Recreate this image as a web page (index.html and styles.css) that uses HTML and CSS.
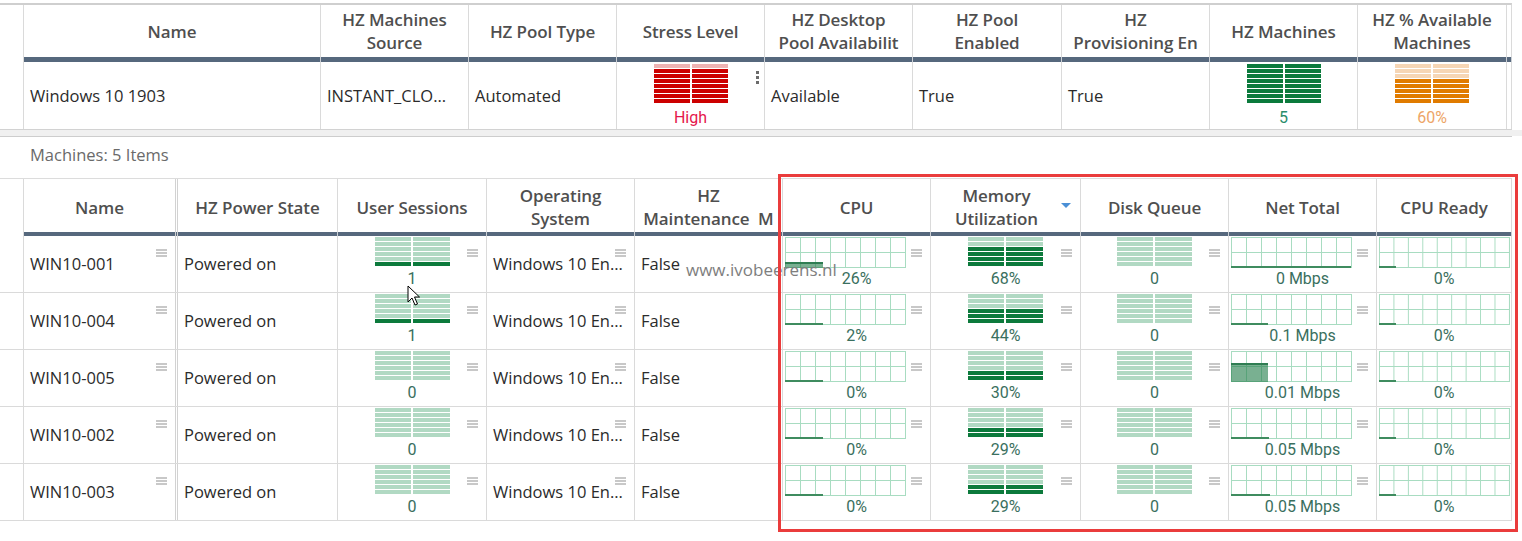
FILE: index.html
```html
<!DOCTYPE html>
<html>
<head>
<meta charset="utf-8">
<title>Horizon pools</title>
<link rel="stylesheet" href="styles.css">
</head>
<body>
<div class="page">
  <section class="panel top-panel">
    <div class="row thead tcols">
      <div class="c stub"></div>
      <div class="c h">Name</div>
      <div class="c h">HZ Machines<br>Source</div>
      <div class="c h">HZ Pool Type</div>
      <div class="c h">Stress Level</div>
      <div class="c h">HZ Desktop<br>Pool Availabilit</div>
      <div class="c h">HZ Pool<br>Enabled</div>
      <div class="c h">HZ<br>Provisioning En</div>
      <div class="c h">HZ Machines</div>
      <div class="c h">HZ % Available<br>Machines</div>
      <div class="c end"></div>
    </div>
    <div class="row hbar tcols">
      <div class="c stub"></div><div class="c"></div><div class="c"></div><div class="c"></div><div class="c"></div><div class="c"></div><div class="c"></div><div class="c"></div><div class="c"></div><div class="c"></div><div class="c"></div>
    </div>
    <div class="row tdata tcols">
      <div class="c stub"></div>
      <div class="c t">Windows 10 1903</div>
      <div class="c t">INSTANT_CLO...</div>
      <div class="c t">Automated</div>
      <div class="c g">
        <div class="bars big red"><i class="l"></i><i></i><i></i><i></i><i></i><i></i><i></i><i></i></div>
        <div class="val high">High</div>
        <span class="kebab"><b></b><b></b><b></b></span>
      </div>
      <div class="c t">Available</div>
      <div class="c t">True</div>
      <div class="c t">True</div>
      <div class="c g">
        <div class="bars big green"><i></i><i></i><i></i><i></i><i></i><i></i><i></i><i></i></div>
        <div class="val five">5</div>
      </div>
      <div class="c g">
        <div class="bars big orange"><i class="l"></i><i class="l"></i><i class="l"></i><i></i><i></i><i></i><i></i><i></i></div>
        <div class="val pct">60%</div>
      </div>
      <div class="c end"></div>
    </div>
  </section>

  <div class="gap"></div>

  <section class="panel low-panel">
    <div class="caption">Machines: 5 Items</div>
    <div class="row lhead lcols">
      <div class="c stub"></div>
      <div class="c h dbl">Name</div>
      <div class="c h">HZ Power State</div>
      <div class="c h">User Sessions</div>
      <div class="c h">Operating<br>System</div>
      <div class="c h">HZ<br>Maintenance&nbsp; M</div>
      <div class="c h">CPU</div>
      <div class="c h sorted">Memory<br>Utilization<span class="sort"></span></div>
      <div class="c h">Disk Queue</div>
      <div class="c h">Net Total</div>
      <div class="c h">CPU Ready</div>
    </div>
    <div class="row lbar lcols">
      <div class="c stub"></div><div class="c dbl"></div><div class="c"></div><div class="c"></div><div class="c"></div><div class="c"></div><div class="c"></div><div class="c"></div><div class="c"></div><div class="c"></div><div class="c"></div>
    </div>

    <!-- row 1 -->
    <div class="row lrow lcols">
      <div class="c stub"></div>
      <div class="c t dbl">WIN10-001<span class="ham"></span></div>
      <div class="c t">Powered on</div>
      <div class="c g"><div class="bars sm lg"><i></i><i></i><i></i><i></i><i></i><i class="d"></i></div><div class="val">1</div><span class="ham"></span></div>
      <div class="c t">Windows 10 En...<span class="ham"></span></div>
      <div class="c t">False</div>
      <div class="c s"><div class="spark"><span class="fill" style="width:38px;height:6px"></span></div><div class="val">26%</div><span class="ham"></span></div>
      <div class="c g"><div class="bars sm lg"><i></i><i></i><i class="d"></i><i class="d"></i><i class="d"></i><i class="d"></i></div><div class="val">68%</div><span class="ham"></span></div>
      <div class="c g"><div class="bars sm lg"><i></i><i></i><i></i><i></i><i></i><i></i></div><div class="val">0</div><span class="ham"></span></div>
      <div class="c s"><div class="spark"><span class="line" style="width:120px"></span></div><div class="val">0 Mbps</div><span class="ham"></span></div>
      <div class="c s"><div class="spark wide"><span class="line" style="width:17px"></span></div><div class="val">0%</div></div>
    </div>

    <!-- row 2 -->
    <div class="row lrow lcols">
      <div class="c stub"></div>
      <div class="c t dbl">WIN10-004<span class="ham"></span></div>
      <div class="c t">Powered on</div>
      <div class="c g"><div class="bars sm lg"><i></i><i></i><i></i><i></i><i></i><i class="d"></i></div><div class="val">1</div><span class="ham"></span></div>
      <div class="c t">Windows 10 En...<span class="ham"></span></div>
      <div class="c t">False</div>
      <div class="c s"><div class="spark"><span class="line" style="width:38px"></span></div><div class="val">2%</div><span class="ham"></span></div>
      <div class="c g"><div class="bars sm lg"><i></i><i></i><i></i><i class="d"></i><i class="d"></i><i class="d"></i></div><div class="val">44%</div><span class="ham"></span></div>
      <div class="c g"><div class="bars sm lg"><i></i><i></i><i></i><i></i><i></i><i></i></div><div class="val">0</div><span class="ham"></span></div>
      <div class="c s"><div class="spark"><span class="line" style="width:37px"></span></div><div class="val">0.1 Mbps</div><span class="ham"></span></div>
      <div class="c s"><div class="spark wide"><span class="line" style="width:17px"></span></div><div class="val">0%</div></div>
    </div>

    <!-- row 3 -->
    <div class="row lrow lcols">
      <div class="c stub"></div>
      <div class="c t dbl">WIN10-005<span class="ham"></span></div>
      <div class="c t">Powered on</div>
      <div class="c g"><div class="bars sm lg"><i></i><i></i><i></i><i></i><i></i><i></i></div><div class="val">0</div><span class="ham"></span></div>
      <div class="c t">Windows 10 En...<span class="ham"></span></div>
      <div class="c t">False</div>
      <div class="c s"><div class="spark"><span class="line" style="width:38px"></span></div><div class="val">0%</div><span class="ham"></span></div>
      <div class="c g"><div class="bars sm lg"><i></i><i></i><i></i><i></i><i class="d"></i><i class="d"></i></div><div class="val">30%</div><span class="ham"></span></div>
      <div class="c g"><div class="bars sm lg"><i></i><i></i><i></i><i></i><i></i><i></i></div><div class="val">0</div><span class="ham"></span></div>
      <div class="c s"><div class="spark"><span class="fill" style="width:37px;height:19px"></span></div><div class="val">0.01 Mbps</div><span class="ham"></span></div>
      <div class="c s"><div class="spark wide"><span class="line" style="width:17px"></span></div><div class="val">0%</div></div>
    </div>

    <!-- row 4 -->
    <div class="row lrow lcols">
      <div class="c stub"></div>
      <div class="c t dbl">WIN10-002<span class="ham"></span></div>
      <div class="c t">Powered on</div>
      <div class="c g"><div class="bars sm lg"><i></i><i></i><i></i><i></i><i></i><i></i></div><div class="val">0</div><span class="ham"></span></div>
      <div class="c t">Windows 10 En...<span class="ham"></span></div>
      <div class="c t">False</div>
      <div class="c s"><div class="spark"><span class="line" style="width:38px"></span></div><div class="val">0%</div><span class="ham"></span></div>
      <div class="c g"><div class="bars sm lg"><i></i><i></i><i></i><i></i><i class="d"></i><i class="d"></i></div><div class="val">29%</div><span class="ham"></span></div>
      <div class="c g"><div class="bars sm lg"><i></i><i></i><i></i><i></i><i></i><i></i></div><div class="val">0</div><span class="ham"></span></div>
      <div class="c s"><div class="spark"><span class="line" style="width:38px"></span></div><div class="val">0.05 Mbps</div><span class="ham"></span></div>
      <div class="c s"><div class="spark wide"><span class="line" style="width:17px"></span></div><div class="val">0%</div></div>
    </div>

    <!-- row 5 -->
    <div class="row lrow lcols">
      <div class="c stub"></div>
      <div class="c t dbl">WIN10-003<span class="ham"></span></div>
      <div class="c t">Powered on</div>
      <div class="c g"><div class="bars sm lg"><i></i><i></i><i></i><i></i><i></i><i></i></div><div class="val">0</div><span class="ham"></span></div>
      <div class="c t">Windows 10 En...<span class="ham"></span></div>
      <div class="c t">False</div>
      <div class="c s"><div class="spark"><span class="line" style="width:38px"></span></div><div class="val">0%</div><span class="ham"></span></div>
      <div class="c g"><div class="bars sm lg"><i></i><i></i><i></i><i></i><i class="d"></i><i class="d"></i></div><div class="val">29%</div><span class="ham"></span></div>
      <div class="c g"><div class="bars sm lg"><i></i><i></i><i></i><i></i><i></i><i></i></div><div class="val">0</div><span class="ham"></span></div>
      <div class="c s"><div class="spark"><span class="line" style="width:39px"></span></div><div class="val">0.05 Mbps</div><span class="ham"></span></div>
      <div class="c s"><div class="spark wide"><span class="line" style="width:17px"></span></div><div class="val">0%</div></div>
    </div>
  </section>

  <div class="watermark">www.ivobeerens.nl</div>
  <div class="highlight"></div>
  <svg class="cursor" width="14" height="22" viewBox="0 0 14 22">
    <path d="M1 1 L1 17 L5 13 L8 20 L10.5 19 L7.5 12 L12.5 12 Z" fill="#fff" stroke="#000" stroke-width="1" stroke-linejoin="round"/>
  </svg>
</div>
</body>
</html>
```

FILE: styles.css
```css
* { box-sizing: border-box; }

html, body {
  margin: 0;
  padding: 0;
  background: #ffffff;
}

.page {
  position: relative;
  width: 1522px;
  height: 541px;
  overflow: hidden;
  padding-top: 3px;
  font-family: "Open Sans", "Noto Sans", "Liberation Sans", sans-serif;
  color: #2b2b2b;
  font-size: 16.5px;
}

.panel { width: 1512px; }

.top-panel {
  border-top: 2px solid #cfcfcf;
  border-bottom: 1px solid #d2d2d2;
  border-right: 1px solid #d6d6d6;
}

.gap {
  height: 6px;
  background: #f0f0f0;
  width: 1522px;
}

.low-panel {
  border-top: 1px solid #cdcdcd;
}

.caption {
  height: 42px;
  line-height: 36px;
  padding-left: 30px;
  color: #6a6a6a;
  font-size: 16.5px;
  border-bottom: 1px solid #dcdcdc;
}

.row { display: grid; }

.tcols { grid-template-columns: 24px 297px 148px 148px 148px 148px 149px 148px 148px 149px 5px; }
.lcols { grid-template-columns: 24px 154px 160px 149px 148px 148px 148px 150px 148px 148px 135px; }

.c {
  border-right: 1px solid #dadada;
  position: relative;
  overflow: hidden;
  white-space: nowrap;
}

.c.dbl { border-right: 3px double #d2d2d2; }

/* header cells */
.h {
  display: flex;
  align-items: center;
  justify-content: center;
  text-align: center;
  font-weight: 600;
  color: #4f4f4f;
  font-size: 17px;
  line-height: 23px;
  letter-spacing: -0.1px;
}

.thead { height: 52px; }
.lhead { height: 53px; }
.lhead .h { padding-top: 3px; }

.hbar { height: 5px; }
.lbar { height: 4px; }
.hbar .c, .lbar .c {
  background: #56687d;
  border-right: 1px solid #c9ced4;
}
.hbar .c.stub, .lbar .c.stub { background: transparent; border-right: 1px solid #dadada; }
.lbar .c.dbl { border-right: 3px double #d2d2d2; }

/* data cells */
.tdata { height: 67px; }

.t {
  display: flex;
  align-items: center;
  padding-left: 6px;
  font-size: 16.5px;
  color: #2b2b2b;
}

.lrow {
  height: 57px;
  border-bottom: 1px solid #dadada;
}

.lrow .t { padding-bottom: 1px; }

/* graph cells */
.g {
  display: flex;
  flex-direction: column;
  align-items: center;
}

.tdata .g { padding-top: 2px; }

.val {
  font-family: Roboto, "Liberation Sans", sans-serif;
  font-size: 16px;
  line-height: 20px;
  color: #3a6f5e;
  text-align: center;
}

.tdata .val { margin-top: 5px; }
.val.high { color: #e5174c; }
.val.five { color: #2a8d6c; }
.val.pct { color: #eda567; }

/* stacked bars */
.bars {
  display: flex;
  flex-direction: column;
  gap: 1px;
}
.bars i {
  display: block;
  height: 4px;
  background-image: linear-gradient(90deg, transparent 0 calc(50% - 1px), #ffffff calc(50% - 1px) calc(50% + 1px), transparent calc(50% + 1px));
}
.bars.big { width: 74px; }
.bars.sm { width: 75px; margin-top: 1px; height: 32px; }

.red i { background-color: #cc0000; }
.red i.l { background-color: #eeb3b3; }
.green i { background-color: #0b7a3c; }
.orange i { background-color: #e07b00; }
.orange i.l { background-color: #f6d6b5; }
.lg i { background-color: #b1d9c3; }
.lg i.d { background-color: #0c7a3c; }

.lrow .g .val,
.lrow .s .val { margin-top: 0; }

/* sparkline cells */
.s {
  display: flex;
  flex-direction: column;
  align-items: stretch;
  padding-left: 2px;
}
.s .val { padding-right: 2px; }

.spark {
  position: relative;
  margin-top: 1px;
  width: 121px;
  height: 31px;
  border-right: 1px solid #a8dcc1;
  border-bottom: 1px solid #a8dcc1;
  background-image:
    linear-gradient(90deg, #a8dcc1 1px, transparent 1px),
    linear-gradient(180deg, #a8dcc1 1px, transparent 1px);
  background-size: 15px 15px, 15px 15px;
  margin-bottom: 1px;
}
.spark.wide {
  width: 131px;
  background-size: 14.44px 15px, 14.44px 15px;
}

.spark .line {
  position: absolute;
  left: 0;
  bottom: -1px;
  height: 2px;
  background: #3f8c5f;
}
.spark .fill {
  position: absolute;
  left: 0;
  bottom: -1px;
  background: rgba(38, 128, 78, 0.62);
  border-top: 2px solid #2f7d52;
}

/* icons */
.ham {
  position: absolute;
  right: 8px;
  top: 13px;
  width: 11px;
  height: 2px;
  background: #c8c8c8;
  box-shadow: 0 3px 0 #c8c8c8, 0 6px 0 #c8c8c8;
}

.kebab {
  position: absolute;
  right: 5px;
  top: 9px;
  display: flex;
  flex-direction: column;
  gap: 2px;
}
.kebab b {
  display: block;
  width: 3px;
  height: 3px;
  background: #6b6b6b;
}

.sorted { padding-right: 18px; }
.sort {
  position: absolute;
  right: 9px;
  top: 24px;
  width: 0;
  height: 0;
  border-left: 5px solid transparent;
  border-right: 5px solid transparent;
  border-top: 5px solid #4a8fd6;
}

/* overlays */
.watermark {
  position: absolute;
  left: 686px;
  top: 259px;
  font-family: "Open Sans", "Liberation Sans", sans-serif;
  font-size: 17px;
  color: #7e7e7e;
  line-height: 22px;
}

.highlight {
  position: absolute;
  left: 778px;
  top: 174px;
  width: 740px;
  height: 358px;
  border: 3px solid #ea3c3c;
  pointer-events: none;
}

.cursor {
  position: absolute;
  left: 407px;
  top: 285px;
}
```
